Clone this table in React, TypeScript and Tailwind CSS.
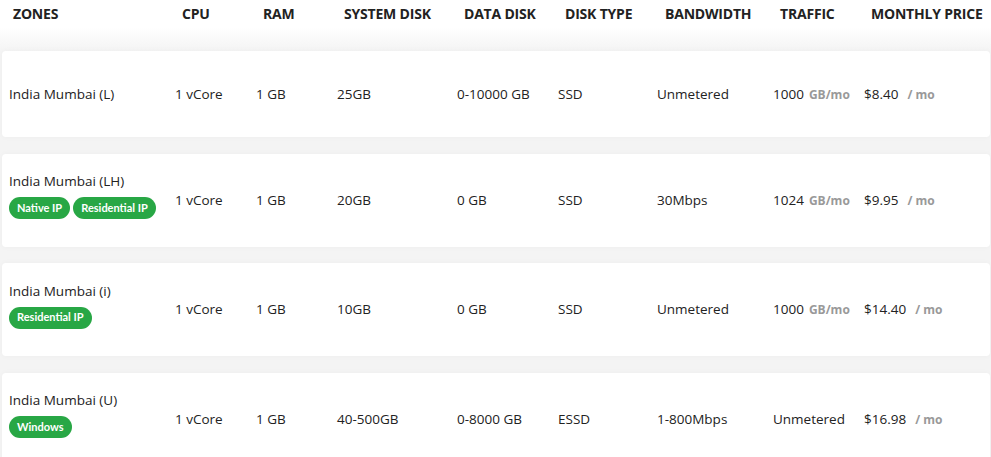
type Plan = {
  zone: string;
  tags: string[];
  cpu: string;
  ram: string;
  sysDisk: string;
  dataDisk: string;
  diskType: string;
  bandwidth: string;
  traffic: string;
  trafficUnit: boolean;
  price: string;
};

const plans: Plan[] = [
  { zone: 'India Mumbai (L)', tags: [], cpu: '1 vCore', ram: '1 GB', sysDisk: '25GB', dataDisk: '0-10000 GB', diskType: 'SSD', bandwidth: 'Unmetered', traffic: '1000', trafficUnit: true, price: '$8.40' },
  { zone: 'India Mumbai (LH)', tags: ['Native IP', 'Residential IP'], cpu: '1 vCore', ram: '1 GB', sysDisk: '20GB', dataDisk: '0 GB', diskType: 'SSD', bandwidth: '30Mbps', traffic: '1024', trafficUnit: true, price: '$9.95' },
  { zone: 'India Mumbai (i)', tags: ['Residential IP'], cpu: '1 vCore', ram: '1 GB', sysDisk: '10GB', dataDisk: '0 GB', diskType: 'SSD', bandwidth: 'Unmetered', traffic: '1000', trafficUnit: true, price: '$14.40' },
  { zone: 'India Mumbai (U)', tags: ['Windows'], cpu: '1 vCore', ram: '1 GB', sysDisk: '40-500GB', dataDisk: '0-8000 GB', diskType: 'ESSD', bandwidth: '1-800Mbps', traffic: 'Unmetered', trafficUnit: false, price: '$16.98' },
];

const headers = ['ZONES', 'CPU', 'RAM', 'SYSTEM DISK', 'DATA DISK', 'DISK TYPE', 'BANDWIDTH', 'TRAFFIC', 'MONTHLY PRICE'];

export default function App() {
  return (
    <div className="w-[991px] h-[457px] overflow-hidden bg-white" style={{ fontFamily: '"Open Sans", "Noto Sans", sans-serif' }}>
      <div className="grid grid-cols-[169px_81px_81px_120px_101px_100px_115px_91px_1fr] pl-[13px] h-[27px] items-center text-[14px] font-bold text-[#222]">
        {headers.map((h) => (
          <div key={h} className="whitespace-nowrap tracking-[-0.2px]">{h}</div>
        ))}
      </div>
      <div className="h-[24px] bg-gradient-to-b from-white to-[#f4f4f4]" />
      <div className="bg-[#f4f4f4] flex flex-col gap-[16.5px] pl-[2px] pr-[1px]">
        {plans.map((p, i) => (
          <div
            key={p.zone}
            className={`bg-white rounded-[4px] shadow-[0_0_6px_rgba(0,0,0,0.03)] grid grid-cols-[166px_81px_81px_120px_101px_99px_116px_91px_1fr] pl-[7px] items-center text-[13.5px] text-[#222] ${i === 0 ? 'h-[86px]' : 'h-[93px]'}`}
          >
            <div className={p.tags.length > 0 ? 'pb-[10px]' : ''}>
              <div className="leading-[20px]">{p.zone}</div>
              {p.tags.length > 0 && (
                <div className="flex gap-[3px] mt-[6px]">
                  {p.tags.map((t) => (
                    <span
                      key={t}
                      className="h-[22px] px-[8px] rounded-full bg-[#28a745] text-white text-[11px] font-bold flex items-center whitespace-nowrap"
                      style={{ fontFamily: '"Lato", "Open Sans", sans-serif' }}
                    >
                      {t}
                    </span>
                  ))}
                </div>
              )}
            </div>
            <div>{p.cpu}</div>
            <div>{p.ram}</div>
            <div>{p.sysDisk}</div>
            <div>{p.dataDisk}</div>
            <div>{p.diskType}</div>
            <div>{p.bandwidth}</div>
            <div className="whitespace-nowrap">
              {p.traffic}
              {p.trafficUnit && <span className="ml-[5px] text-[12px] font-bold text-[#999]">GB/mo</span>}
            </div>
            <div className="whitespace-nowrap">
              {p.price}
              <span className="ml-[9px] text-[12px] font-bold text-[#999]">/ mo</span>
            </div>
          </div>
        ))}
      </div>
    </div>
  );
}
